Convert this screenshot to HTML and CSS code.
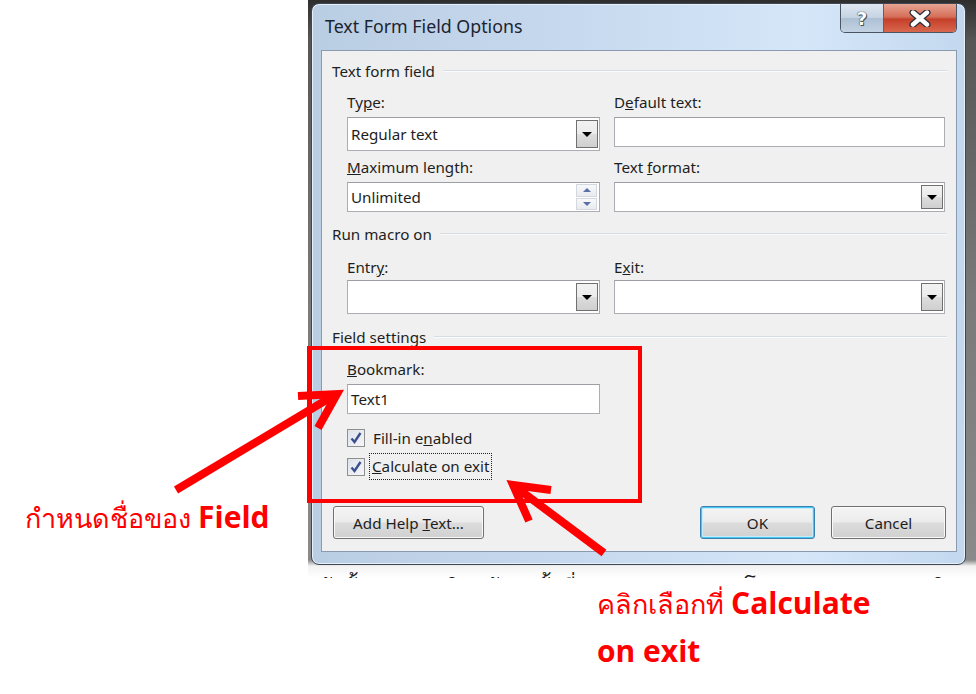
FILE: index.html
```html
<!DOCTYPE html>
<html>
<head>
<meta charset="utf-8">
<link rel="stylesheet" href="styles.css">
</head>
<body>
<div class="page">
  <div class="shot">
    <div class="window">
      <div class="titlebar">
        <span class="title">Text Form Field Options</span>
        <div class="caps">
          <div class="cap help"><span>?</span></div>
          <div class="cap close">
            <svg width="24" height="17" viewBox="0 0 24 17"><path d="M5 2.5 L19 14.5 M19 2.5 L5 14.5" stroke="#2a2f3a" stroke-width="7" stroke-linecap="round"/><path d="M5 2.5 L19 14.5 M19 2.5 L5 14.5" stroke="#fff" stroke-width="4.4" stroke-linecap="round"/></svg>
          </div>
        </div>
      </div>
      <div class="client">
        <div class="group-head"><span>Text form field</span><i></i></div>
        <div class="grid g-first">
          <div class="field">
            <label>Ty<u>p</u>e:</label>
            <div class="box combo tall"><span>Regular text</span><b class="dd"><em></em></b></div>
          </div>
          <div class="field">
            <label>D<u>e</u>fault text:</label>
            <div class="box"></div>
          </div>
          <div class="field">
            <label><u>M</u>aximum length:</label>
            <div class="box spin"><span>Unlimited</span><b class="spinbtns"><s class="up"></s><s class="down"></s></b></div>
          </div>
          <div class="field">
            <label>Text <u>f</u>ormat:</label>
            <div class="box combo"><span></span><b class="dd"><em></em></b></div>
          </div>
        </div>
        <div class="group-head g2"><span>Run macro on</span><i></i></div>
        <div class="grid g-second">
          <div class="field">
            <label>Entr<u>y</u>:</label>
            <div class="box combo tall"><span></span><b class="dd"><em></em></b></div>
          </div>
          <div class="field">
            <label>E<u>x</u>it:</label>
            <div class="box combo tall"><span></span><b class="dd"><em></em></b></div>
          </div>
        </div>
        <div class="group-head g3"><span>Field settings</span><i></i></div>
        <div class="settings">
          <label><u>B</u>ookmark:</label>
          <div class="box bm"><span>Text1</span></div>
          <div class="check c1"><b class="cb"><svg width="14" height="14" viewBox="0 0 14 14"><path d="M2.5 7.5 L5.5 11 L11.5 2" fill="none" stroke="#3c4f8f" stroke-width="2.4"/></svg></b><span>Fill-in e<u>n</u>abled</span></div>
          <div class="check c2"><b class="cb"><svg width="14" height="14" viewBox="0 0 14 14"><path d="M2.5 7.5 L5.5 11 L11.5 2" fill="none" stroke="#3c4f8f" stroke-width="2.4"/></svg></b><span class="focus"><u>C</u>alculate on exit</span></div>
        </div>
        <div class="buttons">
          <div class="btn help-btn"><span>Add Help <u>T</u>ext...</span></div>
          <div class="spacer"></div>
          <div class="btn ok"><span>OK</span></div>
          <div class="btn cancel"><span>Cancel</span></div>
        </div>
      </div>
    </div>
    <div class="docstrip"><span>ดังนั้น ประชุมวิสามัญ ครั้งที่ 30 ตุลาคม 2551 โดยคณะกรรมการบริหาร ดังนั้น</span></div>
  </div>

  <div class="redbox"></div>
  <svg class="arrows" width="976" height="694" viewBox="0 0 976 694">
    <g stroke="#ff0000" stroke-width="8" stroke-linecap="butt" fill="none">
      <path d="M176 490 L333 396"/>
      <path d="M298 396 L337 394 L318 428" stroke-linejoin="miter"/>
      <path d="M604 553 L517 488"/>
      <path d="M551 490 L513 485 L529 521" stroke-linejoin="miter"/>
    </g>
  </svg>
  <div class="note n1">กำหนดชื่อของ <b>Field</b></div>
  <div class="note n2">คลิกเลือกที่ <b>Calculate</b><br><b>on exit</b></div>
</div>
</body>
</html>
```

FILE: styles.css
```css
html, body {
  margin: 0;
  padding: 0;
  background: #ffffff;
}
.page {
  position: relative;
  width: 976px;
  height: 694px;
  overflow: hidden;
  font-family: "Noto Sans", "DejaVu Sans", sans-serif;
}
.shot {
  margin-left: 308px;
  width: 668px;
  height: 578px;
  background: linear-gradient(180deg, #2e2e2e 0px, #565656 40px, #7a7a7a 300px, #8a8a8a 560px, #f2f2f2 566px, #ffffff 578px);
  display: flex;
  flex-direction: column;
  overflow: hidden;
}
.window {
  margin: 3px 10px 0 3px;
  height: 560px;
  border: 1px solid #3e4753;
  border-radius: 8px;
  background: linear-gradient(90deg, #b9cde3 0%, #c7d9ee 40%, #d5e6f8 75%, #c3d8ef 100%);
  box-shadow: inset 0 0 0 1px #e6f0fb;
  display: flex;
  flex-direction: column;
  flex: none;
}
.titlebar {
  height: 46px;
  display: flex;
  align-items: flex-start;
  padding-left: 13px;
  flex: none;
}
.title {
  margin-top: 10px;
  font-size: 17.8px;
  color: #1b2430;
}
.caps {
  margin-left: auto;
  margin-right: 8px;
  display: flex;
  border: 1px solid #4a5564;
  border-top: none;
  border-radius: 0 0 5px 5px;
  overflow: hidden;
  height: 28px;
}
.cap {
  display: flex;
  align-items: center;
  justify-content: center;
}
.help {
  width: 42px;
  background: linear-gradient(180deg, #dfe7f0 0%, #c4d2e2 50%, #adbfd3 51%, #c3d3e4 100%);
  border-right: 1px solid #5a6470;
}
.help span {
  font-family: "DejaVu Sans", sans-serif;
  font-weight: bold;
  font-size: 18px;
  color: #fff;
  text-shadow: 0 0 1px #333, 0 0 1px #333, 1px 1px 0 #555;
}
.close {
  width: 72px;
  background: linear-gradient(180deg, #e7a493 0%, #d5705a 45%, #c5402a 55%, #d9674e 100%);
}
.client {
  margin: 0 8px 0 9px;
  height: 502px;
  background: #f0f0f0;
  border: 1px solid #8a9bb1;
  box-sizing: border-box;
  padding: 10px 9px 0 10px;
  display: flex;
  flex-direction: column;
  font-size: 15.2px;
  color: #1e1e1e;
}
.group-head {
  display: flex;
  align-items: center;
  height: 20px;
  gap: 8px;
}
.group-head i {
  flex: 1;
  height: 1px;
  background: #d6dde3;
  border-bottom: 1px solid #fbfbfb;
}
.g2 { margin-top: 12px; }
.g3 { margin-top: 13px; }
.grid {
  display: grid;
  grid-template-columns: 253px 331px;
  column-gap: 14px;
  row-gap: 6px;
  padding-left: 15px;
}
.g-first { margin-top: 11px; }
.g-second { margin-top: 13px; }
.g-second label { margin-bottom: 3px; }
.field {
  display: flex;
  flex-direction: column;
}
label {
  height: 20px;
  line-height: 20px;
  margin-bottom: 5px;
}
.box {
  height: 30px;
  box-sizing: border-box;
  background: #fff;
  border: 1px solid #abadb3;
  border-top-color: #9c9ea5;
  display: flex;
  align-items: center;
  padding-left: 3px;
}
.box.tall { height: 34px; }
.box span { flex: 1; }
.dd {
  width: 22px;
  height: calc(100% - 4px);
  margin-right: 1px;
  box-sizing: border-box;
  border: 1px solid #707070;
  background: linear-gradient(180deg, #f2f2f2 0%, #ebebeb 50%, #dddddd 51%, #cfcfcf 100%);
  display: flex;
  align-items: center;
  justify-content: center;
}
.dd em {
  width: 0;
  height: 0;
  border-left: 5px solid transparent;
  border-right: 5px solid transparent;
  border-top: 5px solid #000;
}
.spinbtns {
  width: 21px;
  height: 26px;
  margin-right: 2px;
  display: flex;
  flex-direction: column;
  gap: 1px;
}
.spinbtns s {
  flex: 1;
  border: 1px solid #d4d8de;
  background: linear-gradient(180deg, #f7f8fa, #e8ebef);
  display: flex;
  align-items: center;
  justify-content: center;
}
.spinbtns s::after {
  content: "";
  width: 0;
  height: 0;
  border-left: 4px solid transparent;
  border-right: 4px solid transparent;
}
.spinbtns .up::after { border-bottom: 4px solid #5a6fa8; }
.spinbtns .down::after { border-top: 4px solid #5a6fa8; }
.settings {
  padding-left: 15px;
  margin-top: 12px;
  display: flex;
  flex-direction: column;
  align-items: flex-start;
}
.box.bm {
  width: 253px;
  height: 30px;
}
.check {
  display: flex;
  align-items: center;
  height: 25px;
  gap: 8px;
}
.c1 { margin-top: 11px; }
.c2 { margin-top: 4px; }
.cb {
  width: 16px;
  height: 16px;
  border: 1px solid #8f8f8f;
  background: linear-gradient(135deg, #dfe3ea, #f4f5f7);
  display: flex;
  align-items: center;
  justify-content: center;
}
.focus {
  outline: 1px dotted #222;
  padding: 2px 2px 3px 2px;
  margin-left: -3px;
}
.buttons {
  display: flex;
  margin-top: 27px;
  padding-left: 1px;
  padding-right: 1px;
  gap: 16px;
}
.spacer { flex: 1; }
.btn {
  height: 33px;
  box-sizing: border-box;
  border: 1px solid #707070;
  border-radius: 3px;
  background: linear-gradient(180deg, #f4f4f4 0%, #ececec 48%, #dcdcdc 52%, #d0d0d0 100%);
  display: flex;
  align-items: center;
  justify-content: center;
  box-shadow: inset 0 0 0 1px #fafafa;
}
.help-btn { width: 151px; }
.ok {
  width: 115px;
  border-color: #3c7fb1;
  box-shadow: inset 0 0 0 1px #48c8f0, inset 0 0 0 2px #c4ecfa;
}
.cancel { width: 115px; }
.docstrip {
  height: 14px;
  margin-top: 2px;
  overflow: hidden;
  padding-left: 10px;
  font-size: 22px;
  line-height: 38px;
  color: #222;
  white-space: nowrap;
}
.redbox {
  position: absolute;
  left: 307px;
  top: 346px;
  width: 327px;
  height: 149px;
  border: 4px solid #ff0000;
}
.arrows {
  position: absolute;
  left: 0;
  top: 0;
}
.note {
  position: absolute;
  color: #ff0000;
  font-family: "Noto Sans", "DejaVu Sans", sans-serif;
  font-size: 27px;
  line-height: 40px;
}
.note b {
  font-family: "Open Sans", "Noto Sans", sans-serif;
  font-weight: bold;
  font-size: 30px;
}
.n1 { left: 25px; top: 497px; }
.n2 { left: 597px; top: 579px; line-height: 47px; }
```
